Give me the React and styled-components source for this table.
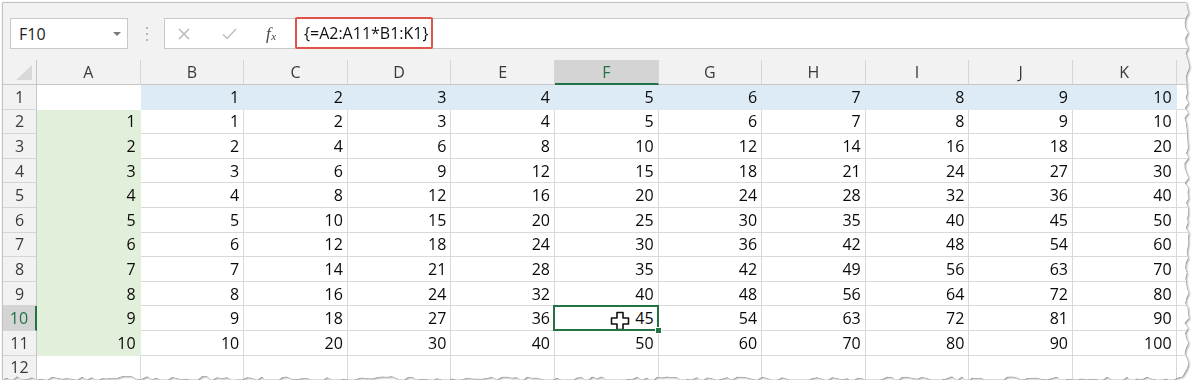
import { Fragment } from 'react';
import styled, { createGlobalStyle } from 'styled-components';

const COLS = ['A', 'B', 'C', 'D', 'E', 'F', 'G', 'H', 'I', 'J', 'K'];
const ROWS = [1, 2, 3, 4, 5, 6, 7, 8, 9, 10, 11, 12];
const SEL_COL = 'F';
const SEL_ROW = 10;
const BLUE = '#ddebf7';
const GREEN = '#e2efda';
const GRID = '#d9d9d9';
const EXCEL_GREEN = '#217346';

// jagged right + bottom edge, like a torn screenshot
const tornEdge = (() => {
  const W = 1188;
  const H = 380;
  let seed = 11;
  const rnd = () => {
    seed = (seed * 9301 + 49297) % 233280;
    return seed / 233280;
  };
  const pts = ['0px 0px', `${W - 4}px 0px`];
  for (let y = 6; y <= H - 8; y += 5) pts.push(`${(W - 6 + rnd() * 5).toFixed(1)}px ${y}px`);
  for (let x = W - 8; x >= 0; x -= 5) pts.push(`${x}px ${(H - 6 + rnd() * 5).toFixed(1)}px`);
  pts.push(`0px ${H - 4}px`);
  return `polygon(${pts.join(', ')})`;
})();

const cellValue = (row, colIndex) => {
  if (row === 1) return colIndex === 0 ? '' : colIndex;
  if (row >= 2 && row <= 11) return colIndex === 0 ? row - 1 : (row - 1) * colIndex;
  return '';
};

const cellFill = (row, colIndex) => {
  if (row === 1 && colIndex > 0) return BLUE;
  if (row >= 2 && row <= 11 && colIndex === 0) return GREEN;
  return null;
};

const App = () => {
  return (
    <>
      <GlobalStyle />
      <Frame>
        <Paper>
          <Toolbar>
            <NameBox>
              <span>F10</span>
              <DropArrow />
            </NameBox>
            <Dots>
              <i />
              <i />
              <i />
            </Dots>
            <FormulaBar>
              <IconSlot $w={38}>
                <svg width="12" height="12" viewBox="0 0 12 12">
                  <path d="M1 1 L11 11 M11 1 L1 11" stroke="#b3b3b3" strokeWidth="1.3" fill="none" />
                </svg>
              </IconSlot>
              <IconSlot $w={52}>
                <svg width="15" height="12" viewBox="0 0 15 12">
                  <path d="M1 6.5 L5 10.5 L14 1" stroke="#bdbdbd" strokeWidth="1.4" fill="none" />
                </svg>
              </IconSlot>
              <IconSlot $w={32}>
                <Fx>
                  f<sub>x</sub>
                </Fx>
              </IconSlot>
              <FormulaInput>{'{=A2:A11*B1:K1}'}</FormulaInput>
            </FormulaBar>
          </Toolbar>
          <Grid>
            <Corner>
              <svg width="16" height="15" viewBox="0 0 16 15">
                <path d="M16 0 L16 15 L0 15 Z" fill="#d9d9d9" />
              </svg>
            </Corner>
            {COLS.map((c) => (
              <ColHead key={c} $selected={c === SEL_COL}>
                {c}
              </ColHead>
            ))}
            <ColHead />
            {ROWS.map((r) => (
              <Fragment key={r}>
                <RowHead $selected={r === SEL_ROW}>{r}</RowHead>
                {COLS.map((c, ci) => {
                  const fill = cellFill(r, ci);
                  const selected = r === SEL_ROW && c === SEL_COL;
                  const blank = r === 1 && ci === 0;
                  return (
                    <Cell
                      key={c}
                      $fill={fill}
                      $line={fill || (blank ? '#fff' : GRID)}
                      $selected={selected}
                    >
                      {selected && (
                        <>
                          <Cursor viewBox="0 0 20 20" width="20" height="20">
                            <path
                              d="M7 1.5 H13 V7 H18.5 V13 H13 V18.5 H7 V13 H1.5 V7 H7 Z"
                              fill="#fff"
                              stroke="#111"
                              strokeWidth="1.6"
                              strokeLinejoin="round"
                            />
                          </Cursor>
                          <Handle />
                        </>
                      )}
                      {cellValue(r, ci)}
                    </Cell>
                  );
                })}
                <Cell $line={GRID} />
              </Fragment>
            ))}
          </Grid>
        </Paper>
      </Frame>
    </>
  );
};

export default App;

const GlobalStyle = createGlobalStyle`
  body {
    margin: 0;
    background: #fff;
    font-family: 'Open Sans', 'Noto Sans', sans-serif;
  }
`;

const Frame = styled.div`
  width: 1188px;
  margin: 2px 0 0 2px;
  filter: drop-shadow(1px 1px 1px rgba(0, 0, 0, 0.45));
`;

const Paper = styled.div`
  background: #f2f2f2;
  border-top: 1px solid #c2c2c2;
  border-left: 1px solid #c2c2c2;
  clip-path: ${tornEdge};
`;

const Toolbar = styled.div`
  display: flex;
  align-items: center;
  height: 57px;
  box-sizing: border-box;
  padding: 4px 0 0 7px;
`;

const NameBox = styled.div`
  display: flex;
  align-items: center;
  justify-content: space-between;
  box-sizing: border-box;
  width: 118px;
  height: 31px;
  padding: 0 6px 0 8px;
  background: #fff;
  border: 1px solid #c8c8c8;
  font-size: 16px;
  color: #222;
`;

const DropArrow = styled.span`
  width: 0;
  height: 0;
  border-left: 4px solid transparent;
  border-right: 4px solid transparent;
  border-top: 4px solid #7a7a7a;
`;

const Dots = styled.div`
  display: flex;
  flex-direction: column;
  gap: 4px;
  margin: 0 16px 0 18px;

  i {
    display: block;
    width: 2px;
    height: 2px;
    background: #b8b8b8;
  }
`;

const FormulaBar = styled.div`
  flex: 1;
  display: flex;
  align-items: stretch;
  height: 31px;
  box-sizing: border-box;
  background: #fff;
  border: 1px solid #c8c8c8;
  border-right: none;
`;

const IconSlot = styled.div`
  width: ${(p) => p.$w}px;
  display: flex;
  align-items: center;
  justify-content: center;
`;

const Fx = styled.span`
  font-family: 'Liberation Serif', 'DejaVu Serif', serif;
  font-style: italic;
  font-size: 17px;
  color: #444;
  line-height: 1;

  sub {
    font-size: 11px;
    vertical-align: -1px;
    margin-left: 0.5px;
  }
`;

const FormulaInput = styled.div`
  display: flex;
  align-items: center;
  box-sizing: border-box;
  width: 138px;
  margin: -2px 0 -1px 8px;
  padding: 0 0 1px 7px;
  border: 2px solid #e0534a;
  border-radius: 2px;
  font-size: 16px;
  color: #111;
  white-space: nowrap;
`;

const Grid = styled.div`
  display: grid;
  grid-template-columns: 34px repeat(11, 103.6px) 1fr;
  grid-template-rows: 25px repeat(12, 24.6px);
  background: #fff;
  font-size: 16px;
`;

const Corner = styled.div`
  display: flex;
  align-items: flex-end;
  justify-content: flex-end;
  padding: 0 4px 4px 0;
  background: #f2f2f2;
  border-right: 1px solid #c6c6c6;
  border-bottom: 1px solid #c6c6c6;
`;

const ColHead = styled.div`
  display: flex;
  align-items: center;
  justify-content: center;
  background: ${(p) => (p.$selected ? '#d4d4d4' : '#f2f2f2')};
  color: ${(p) => (p.$selected ? EXCEL_GREEN : '#3a3a3a')};
  border-right: 1px solid #d6d6d6;
  border-bottom: ${(p) => (p.$selected ? `2px solid ${EXCEL_GREEN}` : '1px solid #c6c6c6')};
`;

const RowHead = styled.div`
  display: flex;
  align-items: center;
  justify-content: center;
  background: ${(p) => (p.$selected ? '#d4d4d4' : '#f2f2f2')};
  color: ${(p) => (p.$selected ? EXCEL_GREEN : '#3a3a3a')};
  border-bottom: 1px solid #d6d6d6;
  border-right: ${(p) => (p.$selected ? `2px solid ${EXCEL_GREEN}` : '1px solid #c6c6c6')};
`;

const Cell = styled.div`
  position: relative;
  display: flex;
  align-items: center;
  justify-content: flex-end;
  padding-right: 4px;
  background: ${(p) => p.$fill || '#fff'};
  border-right: 1px solid ${(p) => p.$line};
  border-bottom: 1px solid ${(p) => p.$line};
  color: #0a0a0a;
  z-index: ${(p) => (p.$selected ? 2 : 'auto')};

  ${(p) =>
    p.$selected &&
    `
    &::after {
      content: '';
      position: absolute;
      inset: -1px -1px -1px -2px;
      border: 2px solid ${EXCEL_GREEN};
      pointer-events: none;
    }
  `}
`;

const Handle = styled.span`
  position: absolute;
  right: -4px;
  bottom: -4px;
  width: 5px;
  height: 5px;
  background: ${EXCEL_GREEN};
  border: 1px solid #fff;
  z-index: 3;
`;

const Cursor = styled.svg`
  position: absolute;
  left: 55px;
  top: 5px;
`;
